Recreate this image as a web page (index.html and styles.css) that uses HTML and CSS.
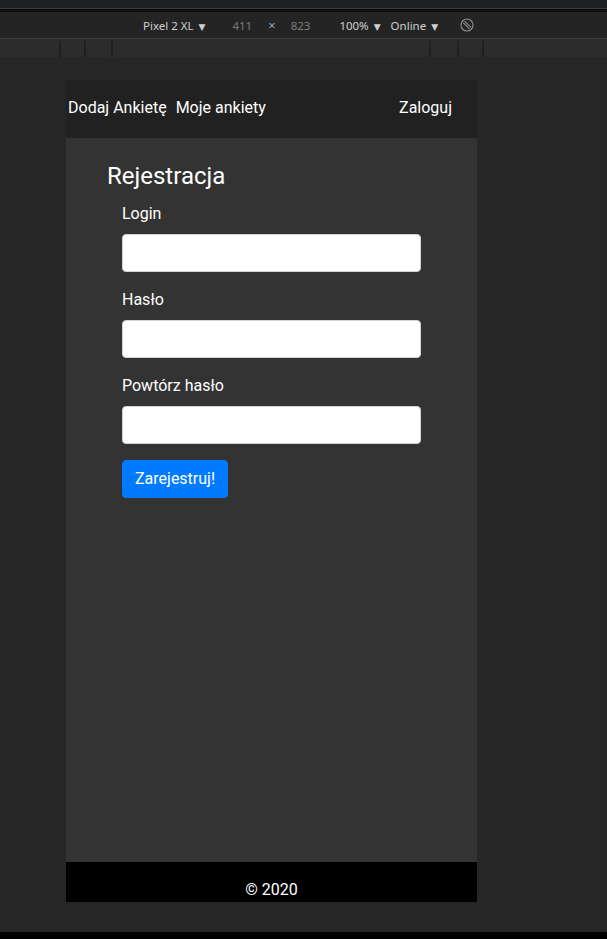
FILE: index.html
```html
<!DOCTYPE html>
<html lang="pl">
<head>
<meta charset="utf-8">
<title>Rejestracja</title>
<link rel="stylesheet" href="styles.css">
</head>
<body>
<div class="devtools">
  <div class="topstrip"></div>
  <div class="toolbar">
    <span class="tb-device">Pixel 2 XL <span class="caret">▼</span></span>
    <span class="tb-dim">411</span>
    <span class="tb-x">×</span>
    <span class="tb-dim">823</span>
    <span class="tb-zoom">100% <span class="caret">▼</span></span>
    <span class="tb-net">Online <span class="caret">▼</span></span>
    <svg class="tb-rotate" width="14" height="14" viewBox="0 0 14 14">
      <circle cx="7" cy="7" r="6" fill="none" stroke="#8a8a8a" stroke-width="1.2"/>
      <line x1="3.2" y1="4.6" x2="9.4" y2="10.8" stroke="#8a8a8a" stroke-width="1.2"/>
      <line x1="4.6" y1="3.2" x2="10.8" y2="9.4" stroke="#8a8a8a" stroke-width="1.2"/>
    </svg>
  </div>
  <div class="ruler">
    <div class="seg s1"></div>
    <div class="seg s2"></div>
    <div class="seg s3"></div>
    <div class="seg s4"></div>
    <div class="seg s5"></div>
    <div class="seg s6"></div>
    <div class="seg s7"></div>
  </div>
  <div class="viewport">
    <div class="device">
      <nav class="nav">
        <a class="nav-link">Dodaj Ankietę</a>
        <a class="nav-link">Moje ankiety</a>
        <a class="nav-link nav-right">Zaloguj</a>
      </nav>
      <main class="content">
        <h3 class="title">Rejestracja</h3>
        <form class="form">
          <div class="group">
            <label class="label">Login</label>
            <input class="input" type="text">
          </div>
          <div class="group">
            <label class="label">Hasło</label>
            <input class="input" type="password">
          </div>
          <div class="group">
            <label class="label">Powtórz hasło</label>
            <input class="input" type="password">
          </div>
          <button class="btn" type="button">Zarejestruj!</button>
        </form>
      </main>
      <footer class="footer">© 2020</footer>
    </div>
  </div>
  <div class="bottom"></div>
</div>
</body>
</html>
```
FILE: styles.css
```css
* { box-sizing: border-box; }
html, body { margin: 0; padding: 0; background: #262626; }
.devtools {
  width: 607px;
  height: 939px;
  display: flex;
  flex-direction: column;
  overflow: hidden;
}
.topstrip {
  height: 12px;
  flex: none;
  background: linear-gradient(#1f2023 0, #1f2023 8px, #3a3a3a 8px, #3a3a3a 9px, #0d0d0d 9px);
}
.toolbar {
  height: 27px;
  flex: none;
  background: #242424;
  border-bottom: 1px solid #3b3b3b;
  display: flex;
  align-items: center;
  font-family: "Noto Sans", "DejaVu Sans", sans-serif;
  font-size: 11.5px;
  color: #cfcfcf;
  padding-left: 143px;
}
.caret { font-size: 9px; margin-left: 2px; }
.tb-dim { color: #7c7c7c; }
.tb-device + .tb-dim { margin-left: 27px; }
.tb-x { color: #8aa0c0; margin: 0 15px 0 16px; font-size: 13px; }
.tb-zoom { margin-left: 29px; }
.tb-net { margin-left: 10px; }
.tb-rotate { margin-left: 22px; }
.ruler {
  height: 18px;
  flex: none;
  background: #2c2c2c;
  display: flex;
  padding-top: 2px;
}
.seg { height: 16px; border-right: 2px solid #1f1f1f; }
.s1 { width: 61px; }
.s2 { width: 25px; }
.s3 { width: 27px; }
.s4 { width: 318px; }
.s5 { width: 28px; }
.s6 { width: 25px; }
.s7 { flex: 1; border-right: none; }
.viewport {
  flex: 1;
  background: #262626;
  padding: 23px 0 0 66px;
}
.bottom { height: 7px; flex: none; background: #000; }
.device {
  width: 411px;
  height: 822px;
  display: flex;
  flex-direction: column;
  font-family: Roboto, "Noto Sans", sans-serif;
  color: #fff;
}
.nav {
  height: 58px;
  flex: none;
  background: #212121;
  display: flex;
  align-items: center;
  padding: 0 25px 4px 2px;
  font-size: 16px;
}
.nav-link { color: #fff; margin-right: 9px; }
.nav-right { margin-left: auto; margin-right: 0; }
.content {
  flex: 1;
  background: #333333;
  padding: 24px 0 0 41px;
}
.title {
  margin: 0 0 11px 0;
  font-size: 24px;
  font-weight: 400;
  line-height: 1.2;
}
.form { margin-left: 15px; width: 299px; }
.group { margin-bottom: 16px; }
.label {
  display: block;
  font-size: 16px;
  line-height: 24px;
  margin-bottom: 8px;
}
.input {
  display: block;
  width: 100%;
  height: 38px;
  border: 1px solid #ced4da;
  border-radius: 4px;
  background: #fff;
  padding: 6px 12px;
  font-size: 16px;
}
.btn {
  font-family: Roboto, "Noto Sans", sans-serif;
  font-size: 16px;
  line-height: 24px;
  color: #fff;
  background: #007bff;
  border: 1px solid #007bff;
  border-radius: 4px;
  padding: 6px 12px;
  height: 38px;
}
.footer {
  height: 40px;
  flex: none;
  background: #000;
  text-align: center;
  font-size: 16px;
  line-height: 20px;
  padding-top: 18px;
}
```
